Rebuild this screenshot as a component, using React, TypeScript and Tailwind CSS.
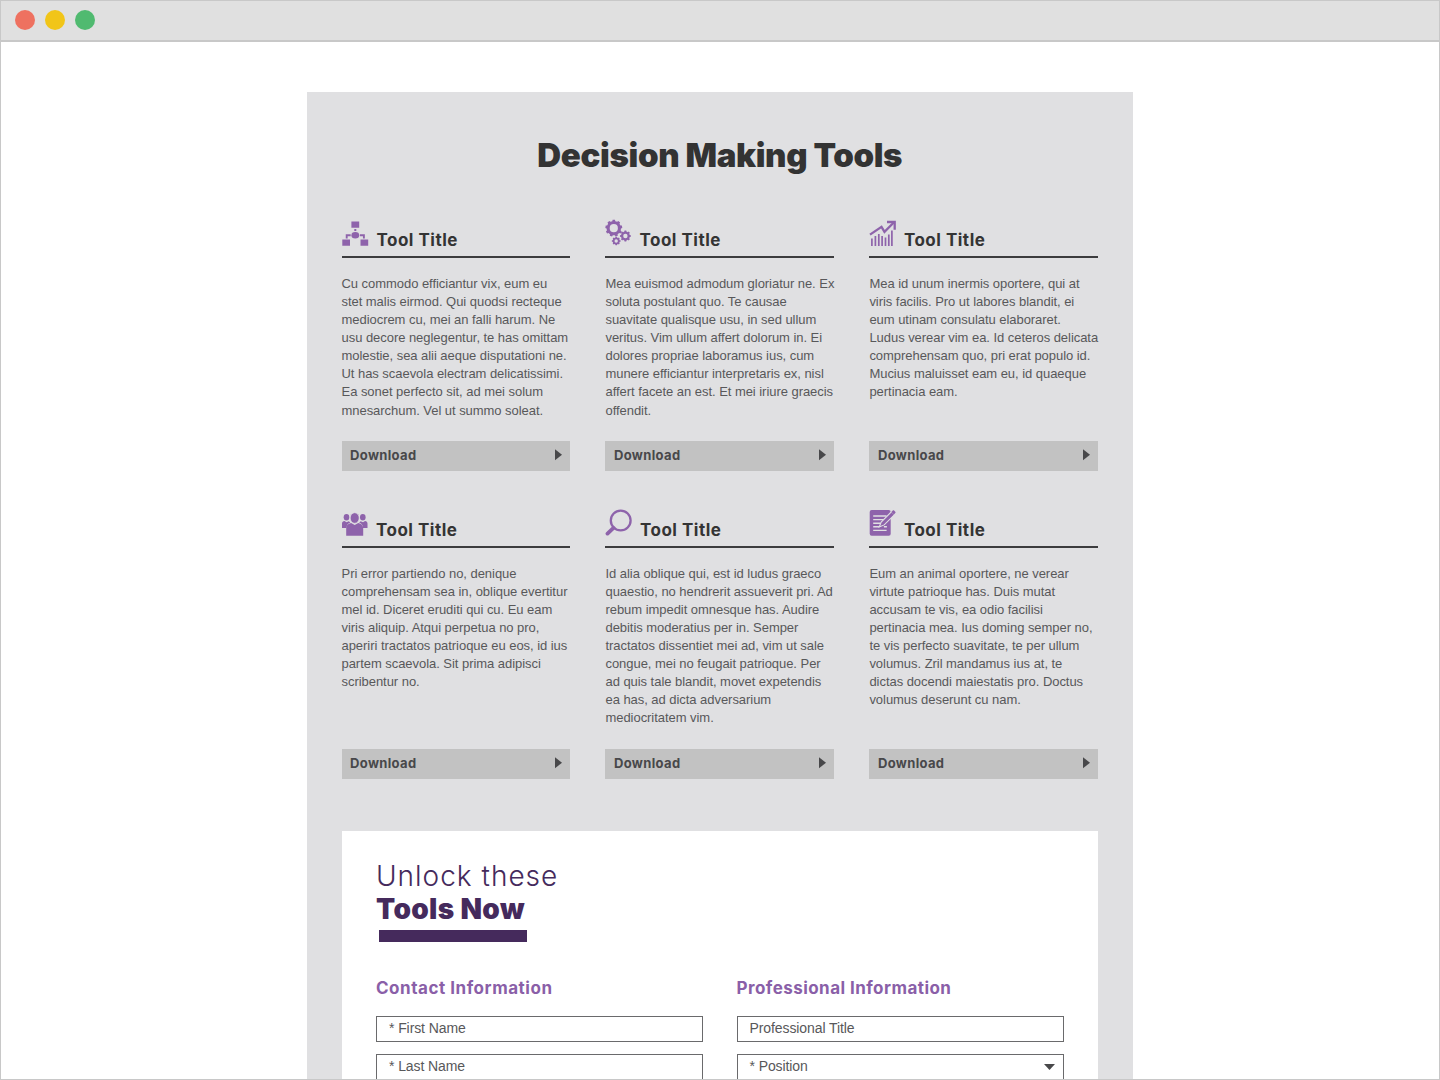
import type { ReactNode } from "react";

const PURPLE = "#8e63ab";

function gearPath(cx: number, cy: number, outer: number, inner: number, hole: number, teeth: number) {
  const pts: string[] = [];
  const step = (Math.PI * 2) / teeth;
  for (let i = 0; i < teeth; i++) {
    const a = i * step - Math.PI / 2;
    const corners: [number, number][] = [
      [inner, -0.3],
      [outer, -0.2],
      [outer, 0.2],
      [inner, 0.3],
    ];
    for (const [r, o] of corners) {
      pts.push(`${(cx + r * Math.cos(a + o * step)).toFixed(2)} ${(cy + r * Math.sin(a + o * step)).toFixed(2)}`);
    }
  }
  return `M${pts.join("L")}ZM${cx - hole} ${cy}a${hole} ${hole} 0 1 0 ${hole * 2} 0a${hole} ${hole} 0 1 0 ${-hole * 2} 0Z`;
}

function Icon({ children }: { children: ReactNode }) {
  return (
    <svg className="h-7 w-7 shrink-0" viewBox="0 0 28 28" fill="none">
      {children}
    </svg>
  );
}

const HierarchyIcon = () => (
  <Icon>
    <path fill={PURPLE} d="M9.400 2.500h7.800v6.300H9.400zM.3 20.500h7.700v6.300H.3zM18.500 20.500h7.700v6.300h-7.700zM12.300 9.900h2v2.200h-2z" />
    <ellipse cx="13.300" cy="16.300" rx="3.900" ry="3.300" fill={PURPLE} />
    <path d="M8.700 16.200H4.700v3.200M17.900 16.200h4v3.200" stroke={PURPLE} strokeWidth="1.900" />
  </Icon>
);

const GearsIcon = () => (
  <Icon>
    <path
      fill={PURPLE}
      fillRule="evenodd"
      d={gearPath(8.8, 9.2, 8.5, 7.2, 4.1, 9) + gearPath(20.4, 17, 5.5, 4.5, 2.2, 8) + gearPath(11.2, 22, 4.4, 3.6, 1.7, 8)}
    />
  </Icon>
);

const ChartIcon = () => (
  <Icon>
    <path
      d="M2.900 19.500v7.500M6.400 17v10M9.800 15v12M13.100 17v10M16.500 18.500v8.500M19.800 15.500v11.500M22.900 11.500v15.500"
      stroke={PURPLE}
      strokeWidth="1.700"
    />
    <path d="M1 15.600 12.500 7.800l3 5L24.500 3.800" stroke={PURPLE} strokeWidth="2.300" />
    <path d="M18 3h7.700v7.800" stroke={PURPLE} strokeWidth="2.300" />
  </Icon>
);

const PeopleIcon = () => (
  <Icon>
    <ellipse cx="4.500" cy="8.300" rx="2.800" ry="3.300" fill={PURPLE} />
    <ellipse cx="20.800" cy="8.300" rx="2.800" ry="3.300" fill={PURPLE} />
    <path
      fill={PURPLE}
      d="M0 19v-4.300c0-1.500 1-2.300 2.500-2.600l2 1.200 2.300-1.100 1.600 1.400c-2.300.6-3.700 2.200-3.900 5.400zM25.500 19v-4.300c0-1.500-1-2.300-2.500-2.600l-2 1.200-2.300-1.100-1.600 1.400c2.300.6 3.700 2.200 3.900 5.400z"
    />
    <ellipse cx="12.700" cy="9" rx="4.500" ry="5.300" fill={PURPLE} stroke="#e0e0e2" strokeWidth=".7" />
    <path fill={PURPLE} d="M4.200 26.800v-7.500c0-3 1.600-4.700 4.900-5.400l3.600 2 3.600-2c3.300.7 4.900 2.400 4.900 5.400v7.500z" />
  </Icon>
);

const SearchIcon = () => (
  <Icon>
    <circle cx="15.700" cy="11.500" r="9.900" stroke={PURPLE} strokeWidth="2.300" />
    <path d="m8.500 18.900-6 5.700" stroke={PURPLE} strokeWidth="3.800" strokeLinecap="round" />
  </Icon>
);

const NoteIcon = () => (
  <Icon>
    <rect x=".7" y="1" width="21" height="25.700" rx="2" fill={PURPLE} />
    <path
      d="M4.200 7h13.400M4.200 10.600h11M4.200 14.200h7.500M4.200 17.800h6M14.900 17.800h3M4.200 21.400h13.400"
      stroke="#e0e0e2"
      strokeWidth="1.400"
    />
    <path d="m10.200 18 2-5L22.600 2.600l3 3-10.400 10.300z" fill={PURPLE} stroke="#e0e0e2" strokeWidth="1.100" />
    <path d="m22.400 2.900 1.400-1.400c.4-.4.9-.4 1.300 0L26.300 2.700c.4.400.4.900 0 1.300l-1.400 1.400z" fill={PURPLE} />
  </Icon>
);

const tools = [
  {
    icon: <HierarchyIcon />,
    gap: "pl-[7px]",
    lines: [
      "Cu commodo efficiantur vix, eum eu",
      "stet malis eirmod. Qui quodsi recteque",
      "mediocrem cu, mei an falli harum. Ne",
      "usu decore neglegentur, te has omittam",
      "molestie, sea alii aeque disputationi ne.",
      "Ut has scaevola electram delicatissimi.",
      "Ea sonet perfecto sit, ad mei solum",
      "mnesarchum. Vel ut summo soleat.",
    ],
  },
  {
    icon: <GearsIcon />,
    gap: "pl-[6px]",
    lines: [
      "Mea euismod admodum gloriatur ne. Ex",
      "soluta postulant quo. Te causae",
      "suavitate qualisque usu, in sed ullum",
      "veritus. Vim ullum affert dolorum in. Ei",
      "dolores propriae laboramus ius, cum",
      "munere efficiantur interpretaris ex, nisl",
      "affert facete an est. Et mei iriure graecis",
      "offendit.",
    ],
  },
  {
    icon: <ChartIcon />,
    gap: "pl-[6.500px]",
    lines: [
      "Mea id unum inermis oportere, qui at",
      "viris facilis. Pro ut labores blandit, ei",
      "eum utinam consulatu elaboraret.",
      "Ludus verear vim ea. Id ceteros delicata",
      "comprehensam quo, pri erat populo id.",
      "Mucius maluisset eam eu, id quaeque",
      "pertinacia eam.",
    ],
  },
  {
    icon: <PeopleIcon />,
    gap: "pl-[6.500px]",
    lines: [
      "Pri error partiendo no, denique",
      "comprehensam sea in, oblique evertitur",
      "mel id. Diceret eruditi qui cu. Eu eam",
      "viris aliquip. Atqui perpetua no pro,",
      "aperiri tractatos patrioque eu eos, id ius",
      "partem scaevola. Sit prima adipisci",
      "scribentur no.",
    ],
  },
  {
    icon: <SearchIcon />,
    gap: "pl-[6.500px]",
    lines: [
      "Id alia oblique qui, est id ludus graeco",
      "quaestio, no hendrerit assueverit pri. Ad",
      "rebum impedit omnesque has. Audire",
      "debitis moderatius per in. Semper",
      "tractatos dissentiet mei ad, vim ut sale",
      "congue, mei no feugait patrioque. Per",
      "ad quis tale blandit, movet expetendis",
      "ea has, ad dicta adversarium",
      "mediocritatem vim.",
    ],
  },
  {
    icon: <NoteIcon />,
    gap: "pl-[6.500px]",
    lines: [
      "Eum an animal oportere, ne verear",
      "virtute patrioque has. Duis mutat",
      "accusam te vis, ea odio facilisi",
      "pertinacia mea. Ius doming semper no,",
      "te vis perfecto suavitate, te per ullum",
      "volumus. Zril mandamus ius at, te",
      "dictas docendi maiestatis pro. Doctus",
      "volumus deserunt cu nam.",
    ],
  },
];

function ToolCard({ icon, gap, lines }: (typeof tools)[number]) {
  return (
    <article className="flex flex-col">
      <header className="flex h-[39px] items-start border-b-2 border-[#3c3c3e]">
        {icon}
        <h2 className={`${gap} pt-[9px] font-['Inter'] text-[17px] leading-6 font-bold tracking-[0.500px] whitespace-nowrap text-[#343434]`}>
          Tool Title
        </h2>
      </header>
      <p className="mt-[17px] mb-[21.200px] font-['Liberation_Sans',sans-serif] text-[13px] leading-[18.080px] tracking-[-0.045px] text-[#58585a]">
        {lines.map((line) => (
          <span key={line} className="block whitespace-nowrap">
            {line}
          </span>
        ))}
      </p>
      <button className="mt-auto flex h-[30px] items-center justify-between bg-[#c2c2c2] pr-[8.500px] pl-[8.500px] text-[#48484a]">
        <span className="pb-[2px] font-['Inter'] text-[13px] leading-4 font-bold tracking-[0.350px]">Download</span>
        <svg className="mb-px h-3 w-[7px]" viewBox="0 0 7 12" fill="currentColor">
          <path d="M0 .2 7 5.700 0 11.200z" />
        </svg>
      </button>
    </article>
  );
}

function Field({ label, select }: { label: string; select?: boolean }) {
  return (
    <div className="flex h-[26px] w-[327px] shrink-0 items-center justify-between border border-[#6a6a6c] bg-white pr-2 pl-[12px]">
      <span className="pb-[2px] font-['Liberation_Sans',sans-serif] text-[14px] leading-4 tracking-[-0.090px] text-[#58585a]">{label}</span>
      {select && (
        <svg className="h-1.5 w-[11px]" viewBox="0 0 11 6" fill="#48484a">
          <path d="M0 0h11L5.500 6z" />
        </svg>
      )}
    </div>
  );
}

function FieldGroup({ title, tracking, children }: { title: string; tracking: string; children: ReactNode }) {
  return (
    <div className="flex w-[327px] flex-col">
      <h3 className={`mb-[16px] font-['Inter'] text-[17px] leading-6 font-bold ${tracking} whitespace-nowrap text-[#8a5fa8]`}>
        {title}
      </h3>
      <div className="flex flex-col gap-[12.500px]">{children}</div>
    </div>
  );
}

export default function App() {
  return (
    <div className="flex h-[1080px] w-[1440px] flex-col overflow-hidden border border-[#c8c8c8] bg-white">
      <div className="flex h-[41px] shrink-0 items-center gap-[10px] border-b-2 border-[#c8c8c8] bg-[#e0e0e0] pb-px pl-[14px]">
        <span className="h-5 w-5 rounded-full bg-[#ee7160]" />
        <span className="h-5 w-5 rounded-full bg-[#f1c518]" />
        <span className="h-5 w-5 rounded-full bg-[#50ba70]" />
      </div>
      <main className="mx-auto mt-[50px] flex min-h-0 w-[826px] grow flex-col overflow-hidden bg-[#e0e0e2] pr-[35px] pl-[34.500px]">
        <h1 className="mt-[43px] text-center font-['Inter'] text-[33px] leading-[40px] font-black tracking-[-0.350px] whitespace-nowrap text-[#333333]">
          Decision Making Tools
        </h1>
        <div className="mt-[44px] grid shrink-0 grid-cols-[228.600px_228.600px_228.600px] auto-rows-min justify-between gap-y-[38px]">
          {tools.map((tool) => (
            <ToolCard key={tool.lines[0]} {...tool} />
          ))}
        </div>
        <section className="mt-[52px] h-[400px] shrink-0 bg-white px-[34.500px] pt-[29px]">
          <h2 className="font-['Inter'] text-[28px] leading-[33px] text-[#452a5c]">
            <span className="block font-light tracking-[1px]">Unlock these</span>
            <span className="block font-black tracking-[0.350px]">Tools Now</span>
          </h2>
          <div className="mt-[4px] ml-[2.500px] h-[12.500px] w-[148.500px] bg-[#452a5c]" />
          <div className="mt-[33.500px] flex justify-between">
            <FieldGroup title="Contact Information" tracking="tracking-[0.530px]">
              <Field label="* First Name" />
              <Field label="* Last Name" />
            </FieldGroup>
            <FieldGroup title="Professional Information" tracking="tracking-[0.450px]">
              <Field label="Professional Title" />
              <Field label="* Position" select />
            </FieldGroup>
          </div>
        </section>
      </main>
    </div>
  );
}
